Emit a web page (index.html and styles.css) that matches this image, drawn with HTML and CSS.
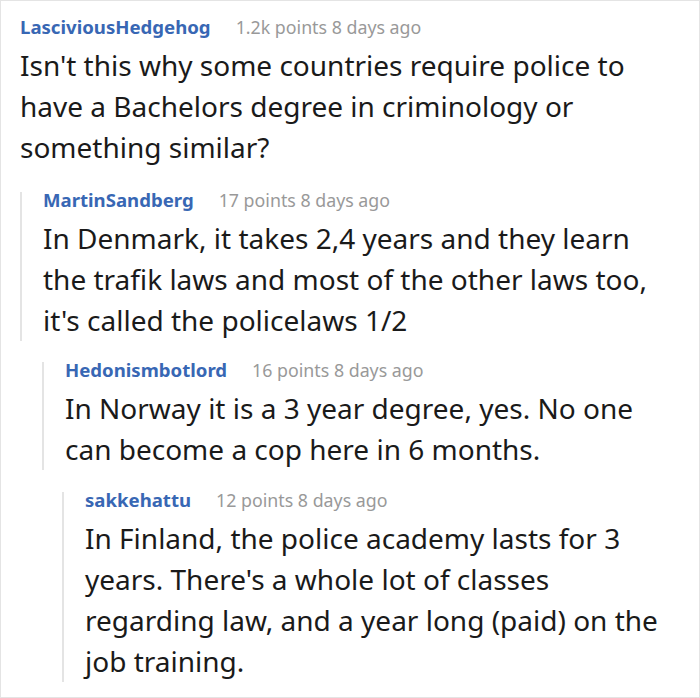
FILE: index.html
```html
<!DOCTYPE html>
<html>
<head>
<meta charset="utf-8">
<link rel="stylesheet" href="styles.css">
</head>
<body>
<div class="thread">
  <div class="comment depth-0">
    <div class="meta"><span class="user">LasciviousHedgehog</span><span class="info">1.2k points 8 days ago</span></div>
    <div class="body">Isn't this why some countries require police to have a Bachelors degree in criminology or something similar?</div>
  </div>
  <div class="comment depth-1">
    <div class="meta"><span class="user">MartinSandberg</span><span class="info">17 points 8 days ago</span></div>
    <div class="body">In Denmark, it takes 2,4 years and they learn the trafik laws and most of the other laws too, it's called the policelaws 1/2</div>
  </div>
  <div class="comment depth-2">
    <div class="meta"><span class="user">Hedonismbotlord</span><span class="info">16 points 8 days ago</span></div>
    <div class="body">In Norway it is a 3 year degree, yes. No one can become a cop here in 6 months.</div>
  </div>
  <div class="comment depth-3">
    <div class="meta"><span class="user">sakkehattu</span><span class="info">12 points 8 days ago</span></div>
    <div class="body">In Finland, the police academy lasts for 3 years. There's a whole lot of classes regarding law, and a year long (paid) on the job training.</div>
  </div>
</div>
</body>
</html>
```

FILE: styles.css
```css
html, body {
  margin: 0;
  padding: 0;
  background: #fff;
}

.thread {
  box-sizing: border-box;
  width: 700px;
  height: 698px;
  border: 1px solid #e4e4e4;
  padding: 18px 20px 0 19px;
  font-family: "Noto Sans", "Open Sans", sans-serif;
  color: #1a1a1a;
}

.comment.depth-0 {
  margin-top: 0;
}

.comment.depth-1,
.comment.depth-2,
.comment.depth-3 {
  border-left: 2px solid #e4e4e4;
  padding-left: 21px;
}

.comment.depth-1 { margin-left: 0; margin-top: 33px; }
.comment.depth-2 { margin-left: 22px; margin-top: 31px; }
.comment.depth-3 { margin-left: 42px; margin-top: 31px; }

.meta {
  font-size: 18px;
  line-height: 16px;
  white-space: nowrap;
}

.user {
  font-size: 18.6px;
  font-weight: 700;
  color: #3867b4;
}

.info {
  font-size: 17.8px;
  color: #999;
  margin-left: 25px;
}

.body {
  font-size: 28px;
  line-height: 41px;
  margin-top: 10px;
  margin-bottom: -9.5px;
}
```
